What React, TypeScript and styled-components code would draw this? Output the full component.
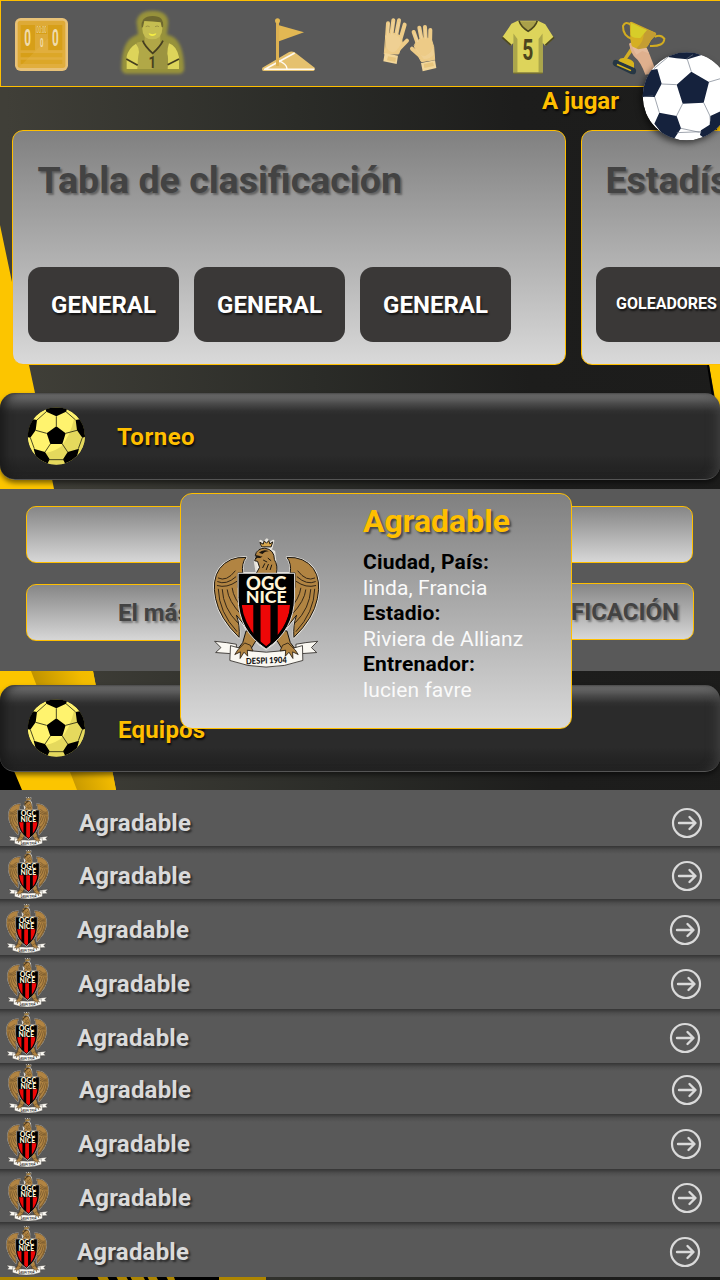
import React from "react";
import styled, { createGlobalStyle } from "styled-components";

const GOLD = "#ffbf00";

const GlobalStyle = createGlobalStyle`
  * { box-sizing: border-box; }
  html, body { margin: 0; padding: 0; background: #1c1c1b; }
  body { font-family: Roboto, "Liberation Sans", sans-serif; overflow: hidden; }
`;

const Screen = styled.div`
  position: relative;
  width: 720px;
  height: 1280px;
  overflow: hidden;
  isolation: isolate;
  display: flex;
  flex-direction: column;
`;

const Backdrop = styled.svg`
  position: absolute;
  inset: 0;
  z-index: -1;
`;

const Header = styled.header`
  height: 87px;
  flex: none;
  display: flex;
  align-items: flex-start;
  padding: 0 0 0 14px;
  background: #595959;
  border: 1px solid ${GOLD};
  border-right: 0;
`;

const NavIcon = styled.svg<{ $gap: number; $top: number }>`
  flex: none;
  margin: ${(p) => p.$top}px 0 0 ${(p) => p.$gap}px;
  overflow: visible;
`;

const PlayRow = styled.div`
  height: 43px;
  flex: none;
  display: flex;
  justify-content: flex-end;
  padding-right: 101px;
`;

const PlayLabel = styled.span`
  font-size: 24px;
  font-weight: 700;
  line-height: 28px;
  color: ${GOLD};
  text-shadow: 1px 2px 2px rgba(0, 0, 0, 0.7);
`;

const PlayBall = styled.svg`
  position: absolute;
  left: 642px;
  top: 52px;
  overflow: visible;
  filter: drop-shadow(-2px 3px 3px rgba(0, 0, 0, 0.55));
`;

const Cards = styled.div`
  flex: none;
  display: flex;
  gap: 15px;
  padding-left: 12px;
`;

const Card = styled.section<{ $pad?: number }>`
  flex: none;
  width: 554px;
  height: 235px;
  padding: 27px 15px 0 ${(p) => p.$pad ?? 15}px;
  border: 1px solid ${GOLD};
  border-radius: 11px;
  background: linear-gradient(#808080, #d9d9d9);
`;

const CardTitle = styled.h2`
  margin: 0 0 0 9.5px;
  height: 109px;
  font-size: 37.5px;
  line-height: 44px;
  font-weight: 700;
  white-space: nowrap;
  color: #434343;
  text-shadow: 2px 2px 2px rgba(0, 0, 0, 0.35);
`;

const CardActions = styled.div`
  display: flex;
  gap: 15px;
`;

const ActionButton = styled.button<{ $small?: boolean }>`
  flex: none;
  width: 151px;
  height: 75px;
  padding: ${(p) => (p.$small ? "0 10px 3px 0" : "0")};
  border: 0;
  border-radius: 13px;
  background: #3a3837;
  color: #fff;
  font: 700 ${(p) => (p.$small ? 16 : 24)}px Roboto, sans-serif;
  text-shadow: 1px 2px 2px rgba(0, 0, 0, 0.7);
`;

const SectionBar = styled.div<{ $top: number; $bottom: number }>`
  flex: none;
  height: 87px;
  margin: ${(p) => p.$top}px 0 ${(p) => p.$bottom}px;
  padding-left: 27px;
  display: flex;
  align-items: center;
  border-radius: 15px;
  border-bottom: 1px solid #555;
  background: linear-gradient(#555 0, #6b6b6b 2px, #646464 5px, #494949 11px, #303030 18px, #2b2b2b 22px, #2b2b2b 62px, #242424 74px, #232323 100%);
  box-shadow: inset 9px 0 10px -4px rgba(24, 24, 24, 0.8), inset -9px 0 12px -7px rgba(75, 75, 75, 0.7), 0 3px 5px rgba(0, 0, 0, 0.5);
`;

const BarTitle = styled.h3<{ $drop?: number }>`
  margin: ${(p) => 2 + (p.$drop ?? 0)}px 0 0 ${(p) => 32 + (p.$drop ? 1 : 0)}px;
  font-size: 24px;
  line-height: 28px;
  letter-spacing: ${(p) => (p.$drop ? 0.2 : 0.5)}px;
  font-weight: 700;
  color: ${GOLD};
  text-shadow: 1px 2px 2px rgba(0, 0, 0, 0.8);
`;

const FilterPanel = styled.section`
  flex: none;
  height: 182px;
  padding: 17px 26px 0;
  background: #595959;
`;

const FilterRow = styled.div`
  display: flex;
  gap: 17px;
  margin-top: 20px;
`;

const Field = styled.div<{ $width: number; $raise?: number; $align?: string; $inset?: number }>`
  flex: none;
  width: ${(p) => p.$width}px;
  height: 57px;
  margin-top: ${(p) => p.$raise ?? 0}px;
  padding: 0 ${(p) => p.$inset ?? 0}px;
  display: flex;
  align-items: center;
  justify-content: ${(p) => p.$align ?? "center"};
  border: 1px solid ${GOLD};
  border-radius: 10px;
  background: linear-gradient(#868686, #d7d7d7);
  color: #434343;
  font-size: 24px;
  font-weight: 700;
  text-shadow: 2px 2px 2px rgba(0, 0, 0, 0.35);
`;

const TeamList = styled.ul`
  flex: none;
  margin: 0;
  padding: 0;
  list-style: none;
`;

const TeamRow = styled.li<{ $height: number; $shift: number; $drop: number; $first: boolean }>`
  display: flex;
  align-items: flex-start;
  height: ${(p) => p.$height}px;
  padding: ${(p) => p.$drop}px 0 0 ${(p) => 8 + p.$shift}px;
  background: ${(p) =>
    p.$first ? "#595959" : "linear-gradient(#353535 0, #414141 2px, #4e4e4e 4px, #595959 8px)"};

  & > svg { flex: none; }
`;

const TeamName = styled.span`
  flex: none;
  width: 592px;
  margin: 13px 0 0 30px;
  font-size: 24px;
  line-height: 28px;
  letter-spacing: 0.2px;
  font-weight: 700;
  color: #dadada;
  text-shadow: 2px 2px 2px rgba(0, 0, 0, 0.5);
`;

const ArrowIcon = styled.svg`
  margin: 11px 0 0 -0.5px;
`;

const Popup = styled.aside`
  position: absolute;
  left: 180px;
  top: 493px;
  width: 392px;
  height: 236px;
  padding: 9px 0 0 32px;
  display: flex;
  border: 1px solid ${GOLD};
  border-radius: 12px;
  background: linear-gradient(#808080, #d9d9d9);

  & > svg { flex: none; margin-top: 34px; }
`;

const PopupBody = styled.div`
  margin-left: 43px;
  font-size: 21px;
  line-height: 25.6px;
  white-space: nowrap;
`;

const PopupTitle = styled.h2`
  margin: 0 0 10px;
  font-size: 32px;
  line-height: 37px;
  font-weight: 700;
  color: ${GOLD};
  text-shadow: 2px 2px 2px rgba(0, 0, 0, 0.5);
`;

const Term = styled.div`
  font-weight: 700;
  letter-spacing: 0.2px;
  color: #000;
`;

const Detail = styled.div`
  font-weight: 400;
  letter-spacing: 0.1px;
  color: #fafafa;
`;

const BackdropArt = () => (
  <Backdrop width="720" height="1280" viewBox="0 0 720 1280" aria-hidden>
    <defs>
      <linearGradient id="dark" x1="0" y1="0" x2="1" y2="-0.1">
        <stop offset="0" stopColor="#403f38" />
        <stop offset="0.4" stopColor="#2b2c28" />
        <stop offset="0.7" stopColor="#1d1d1c" />
        <stop offset="1" stopColor="#1c1c1b" />
      </linearGradient>
      <linearGradient id="fold" gradientUnits="userSpaceOnUse" x1="35" y1="685" x2="95" y2="667">
        <stop offset="0" stopColor="#bf9200" />
        <stop offset="0.75" stopColor="#f2bb00" />
        <stop offset="1" stopColor="#f5bf00" />
      </linearGradient>
    </defs>
    <rect width="720" height="1280" fill="url(#dark)" />
    <polygon points="0,225 12,282 29,365 35,393 54,489 93,671 116,790 266,1280 0,1280" fill="#fcc500" />
    <polygon points="0,560 31,671 77,790 220,1280 266,1280 116,790 93,671 68,560" fill="url(#fold)" />
    <polygon points="0,735 14,771 22,790 180,1280 0,1280" fill="#000" />
    <polygon points="717,125 720,122 720,432 714,393 709,365" fill="#ffc800" />
    <path d="M708 365 L713 397" stroke="#000" strokeWidth="2" />
    <rect y="1274" width="266" height="6" fill="#ad8500" />
    <path d="M76 1274h20l3 6H78z M106 1274h9l3 6h-9z M125 1274h4l3 6h-4z M142 1274h4l3 6h-4z M155 1274h10l3 6h-10z M173 1274h46v6h-44z" fill="#000" />
  </Backdrop>
);

const ScoreboardIcon = () => (
  <NavIcon $gap={0} $top={17} width="53" height="53" viewBox="45 54 159 159">
    <rect x="45" y="54" width="159" height="159" rx="17" fill="#e8c278" />
    <rect x="53" y="62" width="143" height="142" rx="8" fill="#deaa36" />
    <path d="M62 75h43v76H62z M144 75h43v76h-43z M108 78h33v24h-33z M62 159h125v13H62z M62 179h125v13H62z" fill="#d79f18" />
    <path d="M55 204 L145 115 V150 H196 V204z" fill="#e7b84f" opacity=".3" />
    <g fill="#f0dcab" fontFamily="Roboto" textAnchor="middle">
      <text transform="translate(83 137) scale(.5 1)" fontSize="70" fontWeight="700">0</text>
      <text transform="translate(166 137) scale(.5 1)" fontSize="70" fontWeight="700">0</text>
      <text transform="translate(125 140) scale(.5 1)" fontSize="36" fontWeight="700">0</text>
      <text transform="translate(124.500 99) scale(.5 1)" fontSize="25">00:00</text>
    </g>
  </NavIcon>
);

const PlayerIcon = () => (
  <NavIcon $gap={58} $top={15} width="54" height="54" viewBox="378 48 162 162">
    <defs>
      <filter id="halo" x="-40%" y="-40%" width="180%" height="180%">
        <feGaussianBlur stdDeviation="4" />
      </filter>
    </defs>
    <path d="M425 65Q430 48 458 48Q488 48 489 68L486 96L480 112L509 123Q535 135 537 206H380Q380 135 408 123L433 110L428 90z" fill="#97923a" stroke="#97923a" strokeWidth="31" strokeLinejoin="round" filter="url(#halo)" />
    <path d="M434 102h47v33l-24 28-23-30z" fill="#b1a747" />
    <path d="M427 62h60v24q-1 31-30 32-30-1-30-32z" fill="#c5bd51" />
    <path d="M425 83q-4-35 33-35 36 0 31 34l-4-1-3-14q-23-3-49-4l-4 18z" fill="#6f692f" />
    <path d="M437 80q6-4 12 0 M465 80q7-4 12 0" stroke="#9d9342" strokeWidth="3" fill="none" />
    <path d="M446 100q12 5 23 0-2 8-12 8-9 0-11-8z" fill="#f4ed44" />
    <path d="M410 128l21-5 27 40 28-40q24 3 38 24l-18 60H411l-18-62z" fill="#9c9440" />
    <path d="M410 128l21-5 27 40v44h-47z" fill="#b1a847" />
    <path d="M408 131q8 10 9 25-4 20-5 51h-32v-38q6-25 28-38z M507 130q22 7 30 41v36h-34q3-35-1-46 1-20 5-31z" fill="#ddd45a" />
    <path d="M379 177l34 19M537 177l-34 17M428 122q7 18 30 38 23-20 31-38" fill="none" stroke="#453e20" strokeWidth="5" />
    <text transform="translate(457 203) scale(.8 1)" textAnchor="middle" fontFamily="Roboto" fontWeight="700" fontSize="49" fill="#49411f">1</text>
  </NavIcon>
);

const CornerFlagIcon = () => (
  <NavIcon $gap={82} $top={17} width="53" height="53" viewBox="66 53 159 159">
    <path d="M67 202L146 156q8-5 18 0l60 46q2 9-5 10H71q-7-2-4-10z" fill="#e5c16e" />
    <path d="M72 207h151M76 206L164 158M116 181q25 11 25 24" fill="none" stroke="#fffaf0" strokeWidth="4.500" />
    <path d="M108 65h9v132h-9z" fill="#ddb151" />
    <circle cx="112.500" cy="61" r="7.500" fill="#e3b853" />
    <path d="M117 75l75 21-75 27z" fill="#e3b853" />
  </NavIcon>
);

const GlovesIcon = () => (
  <NavIcon $gap={68} $top={17} width="53" height="53" viewBox="429 53 159 159">
    <g fill="#edcb87" stroke="#edcb87" strokeLinecap="round" strokeLinejoin="round">
      <path d="M444 69L441 112M460 60L453 112M477 60L467 112M494 73L480 121M501 121L475 148" strokeWidth="12" />
      <path d="M438 105Q455 90 483 108L487 128 476 161H434z" strokeWidth="3" />
      <path d="M521 95L533 129M538 82L545 119M555 80L557 119M571 89L570 135M516 145L538 165" strokeWidth="12" />
      <path d="M528 126Q546 105 574 117L581 139 584 178 544 184 531 160 523 137z" strokeWidth="3" />
    </g>
    <path d="M434 158l40 8-4 25-40-8z M543 188l42-8 4 23-41 10z" fill="#f2d699" />
    <path d="M444 168l24 4-2 13-25-5z M551 191l28-5 3 11-29 6z" fill="#e7c57e" />
    <path d="M446 68L443 104M460 64L455 103M477 65L469 103M523 99L534 125M538 86L545 115M555 85L557 115" stroke="#efd39c" strokeWidth="4" />
    <path d="M436 107q24-14 44 6l3 17q-13 25-25 26-25-5-19-43M525 140q11 28 30 27 21-8 25-29l2 24q-11 15-31 14z" fill="#f0d49b" opacity=".6" />
  </NavIcon>
);

const ShirtIcon = () => (
  <NavIcon $gap={66} $top={19} width="52" height="54" viewBox="65 62 155 160">
    <path d="M112 64h60l22 10 26 41-26 24-8-10v90H99v-90l-8 10-25-26 27-40z" fill="#ddd45b" />
    <path d="M99 102l12 16v101H99z M186 102l-12 16v101h12z" fill="#aba64a" />
    <path d="M120 65h46q-2 16-23 26-18-8-23-26z" fill="#aaa14a" />
    <path d="M116 64q5 18 27 31 22-13 27-31M66 113l26 24M220 113l-26 24" fill="none" stroke="#4d481f" strokeWidth="5" />
    <path d="M99 218h87v4H99z" fill="#777032" />
    <text transform="translate(142 181) scale(.66 1)" textAnchor="middle" fontFamily="Roboto" fontWeight="700" fontSize="87" fill="#4c451e">5</text>
  </NavIcon>
);

const TrophyIcon = () => (
  <NavIcon $gap={58} $top={20} width="54" height="54" viewBox="395 62 162 162">
    <path d="M452 74q-17-14-24 3-1 30 29 40M523 110q18-10 29 5-1 24-43 22" fill="none" stroke="#d2ac20" strokeWidth="6" />
    <path d="M451 130l-1 13-22 33h12l24-33z" fill="#d4af25" />
    <path d="M446 130l10-6 12 22 30-3 9 17 22 57-34 6q-15-40-29-50-13-11-20-43z" fill="#dfb08e" />
    <path d="M448 66q4-4 9 0l69 31q4 4 0 8-13 11-23 31-17 22-44 9-7-8-9-31z" fill="#d5af23" />
    <path d="M470 75l56 23q3 4-1 8-14 10-23 31-16 19-36 9 28-23 24-54z" fill="#c49d32" />
    <path d="M452 68l48 21-20 24q-28 2-29-11z" fill="#d7cd29" />
    <path d="M454 138l20 9 25-5 7 17-20-7-18 11z" fill="#e4bb9c" />
    <path d="M400 180q8-5 18 3l46 21q7 8 0 17-9 3-20-4l-37-18q-15-4-7-19z" fill="#263744" />
    <path d="M415 180q5-9 17-7 24 3 29 15v14l-46-20z" fill="#d6b31c" />
    <path d="M411 190l42 19-2 4-42-18z" fill="#d6b31c" />
  </NavIcon>
);

const WhiteBall = () => (
  <PlayBall width="89" height="89" viewBox="487 157 267 267">
    <defs>
      <clipPath id="whiteBallEdge"><circle cx="621" cy="290" r="132" /></clipPath>
    </defs>
    <g clipPath="url(#whiteBallEdge)">
      <circle cx="621" cy="290" r="132" fill="#fff" />
      <path d="M635 216L688 247 672 309 609 312 591 255z M565 172l17-16 62-4 22 14-42 13-34-3z M508 212l25-4 13 44-21 40-40 0-2-45z M524 372l15-33 52 10 13 37-19 29-25 3z M661 406l3-14 26-17 2-26 60-28v70l-60 38z M713 180l40 0v50l-20-10z" fill="#15223d" />
      <path d="M635 216l-12-37M688 247l34-10M672 309l19 40M609 312l-19 38M591 255l-45-2M565 172l-42 35M620 178l20-13M525 292l14 47M492 291l29-2M604 386l56 12M691 349l1 16M591 399l74-3" fill="none" stroke="#707987" strokeWidth="2" />
    </g>
  </PlayBall>
);

const YellowBall = () => (
  <svg width="58" height="58" viewBox="-2 -1 174 174">
    <defs>
      <clipPath id="yellowBallEdge"><circle cx="86" cy="86" r="86" /></clipPath>
    </defs>
    <g clipPath="url(#yellowBallEdge)">
      <circle cx="86" cy="86" r="86" fill="#fff36e" />
      <path d="M139 35Q127 88 99 119 61 143 20 136L45 172H150L180 90z" fill="#e5d95d" />
      <path d="M86 57L114 78 104 110H68L57 78z M52 0h68l-5 13-29 14-30-14z M8 34l20 4-4 31L8 91-5 88z M164 34l-20 4 4 31 16 22 13-3z M18 124l34 10 14 22-7 14-32-11z M154 124l-34 10-14 22 7 14 32-11z" fill="#000" />
      <path d="M86 57V27M114 78l34-9M104 110l16 24M68 110l-16 24M57 78l-33-9M28 38L56 13M144 38L115 13M8 91l12 33M164 91l-12 33M62 157h48" fill="none" stroke="#262611" strokeWidth="2.500" />
    </g>
  </svg>
);

const WING =
  "M122 80Q70 77 42 114Q18 148 30 205Q42 265 101 322Q104 285 93 255L121 290Q114 215 98 170V127H112Q108 98 122 80z";

const CrestShape = () => (
  <symbol id="crest" viewBox="22 20 324 396">
    <g stroke="#e6e3dc" strokeWidth="7" strokeLinejoin="round" fill="#f4f1ea">
      <path d={WING} />
      <path d={WING} transform="matrix(-1 0 0 1 368 0)" />
      <path d="M166 30l5 21h28l5-21-10 7-9-11-9 11z M149 92l10-32 25-9 23 12 7 60-60-1z" />
      <path d="M98 128h171v72q-1 101-86 157-85-55-85-156z" />
    </g>
    <g fill="#b18442" stroke="#17130e" strokeWidth="3" strokeLinejoin="round">
      <path d={WING} />
      <path d={WING} transform="matrix(-1 0 0 1 368 0)" />
      <path d="M151 132l12-22-6-18-9-2 4-10 11-3-13-3q4-21 29-22 29 4 29 35 11 17 6 43z" />
      <path d="M169 48l-5-14 10 6 3-10 7 7 7-8 3 10 9-6-5 15z" fill="#d8a74d" />
      <path d="M122 303l-10 35-17 22 17-5 1 15 8-12 11 7 20-33 18 1-20-35z" />
      <path d="M246 303l10 35 17 22-17-5-1 15-8-12-11 7-20-33-18 1 20-35z" />
    </g>
    <path d="M161 66q12-12 30-5-14 0-19 9zM150 76l22 1-7 5-9-1-3 4z" fill="#19140d" />
    <path d="M172 112l7-14M183 118l7-18M195 118l5-16M174 88l12 6M188 82l10 8" fill="none" stroke="#19140d" strokeWidth="3" />
    <g fill="none" stroke="#332516" strokeWidth="3">
      <path d="M37 142q26 13 53-22M35 153q27 12 57-15M34 165q30 9 61-13M38 175q2 71 57 130M50 176q3 58 47 102M65 177q3 34 43 77M80 172q4 34 36 66" />
      <path d="M331 142q-26 13-53-22M333 153q-27 12-57-15M334 165q-30 9-61-13M330 175q-2 71-57 130M318 176q-3 58-47 102M303 177q-3 34-43 77M288 172q-4 34-36 66" />
    </g>
    <path d="M98 128h171v72q-1 101-86 157-85-55-85-156z" fill="#000" stroke="#ddd" strokeWidth="3" />
    <path d="M109 224h35v92q-32-37-35-92z M166 224h30v118l-13 8-17-11z M218 224h37q-1 49-37 92z" fill="#ee0707" />
    <path d="M106 224q12 80 77 128Q248 304 260 224" fill="none" stroke="#000" strokeWidth="5" />
    <g fill="#fff5d8" fontFamily="Lato, sans-serif" fontWeight="900" textAnchor="middle">
      <text x="183" y="178" fontSize="55" textLength="122" lengthAdjust="spacingAndGlyphs">OGC</text>
      <text x="183" y="219" fontSize="51" textLength="124" lengthAdjust="spacingAndGlyphs">NICE</text>
    </g>
    <g fill="#faf8f2" stroke="#292622" strokeWidth="2.500" strokeLinejoin="round">
      <path d="M27 334l36 4 30 5-1 22-20 6-42-3 16-15z M339 334l-36 4-30 5 1 22 20 6 42-3-16-15z" />
      <path d="M75 347q108 40 218 0l1 45q-112 40-221 0z" />
    </g>
    <g fill="#b18442" stroke="#231a10" strokeWidth="2.500">
      <path d="M118 339l-21 21-9 14 17-8-1 20 12-19 11 12-1-18 17 2-8-17z M249 339l22 21 9 14-17-8 1 20-12-19-11 12 1-18-17 2 8-17z" />
    </g>
    <text transform="translate(184 401) rotate(-2)" textAnchor="middle" fontFamily="Lato, sans-serif" fontWeight="900" fontSize="26" textLength="124" lengthAdjust="spacingAndGlyphs" fill="#111">DESPI 1904</text>
  </symbol>
);

const Crest = ({ width, height }: { width: number; height: number }) => (
  <svg width={width} height={height}>
    <use href="#crest" width={width} height={height} />
  </svg>
);

const GoArrow = () => (
  <ArrowIcon width="32" height="32" viewBox="0 0 32 32" fill="none" stroke="#dadada" strokeLinecap="round" strokeLinejoin="round">
    <circle cx="16" cy="16" r="14" strokeWidth="2.200" />
    <path d="M8 16h16M18.500 10l6 6-6 6" strokeWidth="2.400" />
  </ArrowIcon>
);

const teams = [
  { height: 56, shift: 0, drop: 6 },
  { height: 53, shift: 0, drop: 3 },
  { height: 56, shift: -2, drop: 4 },
  { height: 54, shift: -1, drop: 2 },
  { height: 54, shift: -2, drop: 2 },
  { height: 51, shift: 0, drop: 0 },
  { height: 55, shift: -1, drop: 3 },
  { height: 53, shift: 0, drop: 2 },
  { height: 55, shift: -2, drop: 3 },
];

export default function App() {
  return (
    <Screen>
      <GlobalStyle />
      <svg display="none"><CrestShape /></svg>
      <BackdropArt />
      <Header>
        <ScoreboardIcon />
        <PlayerIcon />
        <CornerFlagIcon />
        <GlovesIcon />
        <ShirtIcon />
        <TrophyIcon />
      </Header>
      <PlayRow><PlayLabel>A jugar</PlayLabel></PlayRow>
      <Cards>
        <Card>
          <CardTitle>Tabla de clasificación</CardTitle>
          <CardActions>
            <ActionButton>GENERAL</ActionButton>
            <ActionButton>GENERAL</ActionButton>
            <ActionButton>GENERAL</ActionButton>
          </CardActions>
        </Card>
        <Card $pad={14}>
          <CardTitle>Estadísticas</CardTitle>
          <CardActions>
            <ActionButton $small>GOLEADORES</ActionButton>
          </CardActions>
        </Card>
      </Cards>
      <SectionBar $top={28} $bottom={9}>
        <YellowBall />
        <BarTitle>Torneo</BarTitle>
      </SectionBar>
      <FilterPanel>
        <Field $width={667} />
        <FilterRow>
          <Field $width={325} $raise={1} $align="flex-start" $inset={91}>El más</Field>
          <Field $width={326} $align="flex-end" $inset={14}>CLASIFICACIÓN</Field>
        </FilterRow>
      </FilterPanel>
      <SectionBar $top={14} $bottom={18}>
        <YellowBall />
        <BarTitle $drop={2}>Equipos</BarTitle>
      </SectionBar>
      <TeamList>
        {teams.map((team, i) => (
          <TeamRow key={i} $height={team.height} $shift={team.shift} $drop={team.drop} $first={i === 0}>
            <Crest width={41} height={51} />
            <TeamName>Agradable</TeamName>
            <GoArrow />
          </TeamRow>
        ))}
      </TeamList>
      <WhiteBall />
      <Popup>
        <Crest width={107} height={132} />
        <PopupBody>
          <PopupTitle>Agradable</PopupTitle>
          <Term>Ciudad, País:</Term>
          <Detail>linda, Francia</Detail>
          <Term>Estadio:</Term>
          <Detail>Riviera de Allianz</Detail>
          <Term>Entrenador:</Term>
          <Detail>lucien favre</Detail>
        </PopupBody>
      </Popup>
    </Screen>
  );
}
